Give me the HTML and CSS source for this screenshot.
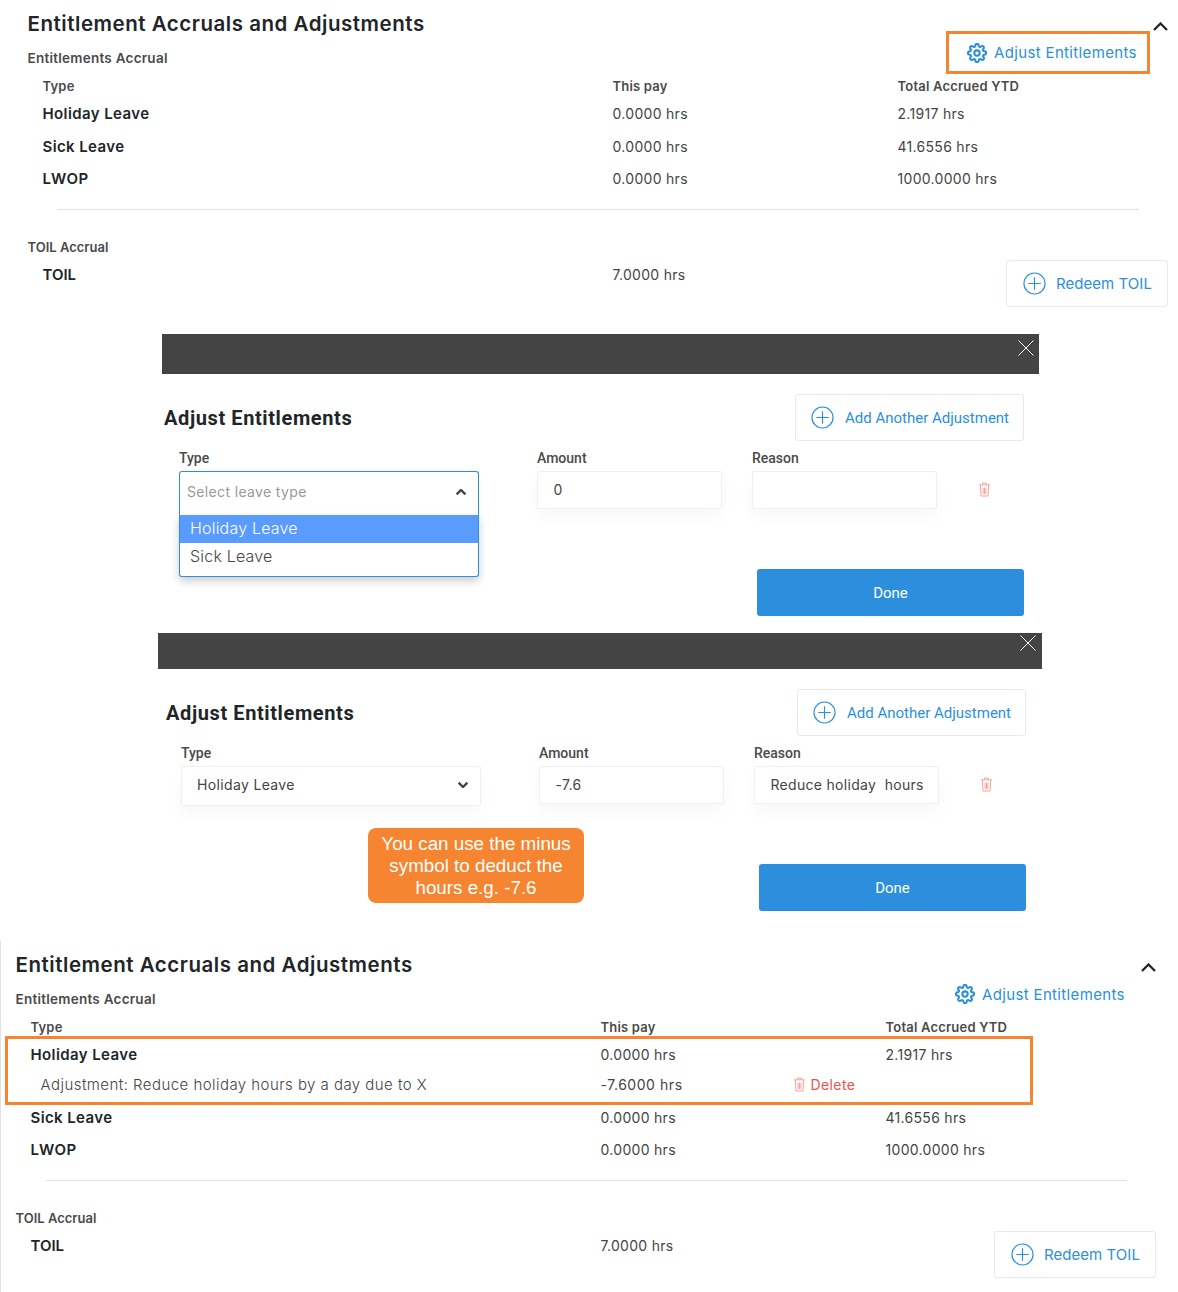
FILE: index.html
```html
<!DOCTYPE html>
<html lang="en">
<head>
    <meta charset="UTF-8">
    <meta name="viewport" content="width=device-width, initial-scale=1.0">
    <title>Entitlement Accruals and Adjustments</title>
    <link rel="stylesheet" href="styles.css">
</head>
<body>
    <svg class="icon-defs" aria-hidden="true">
        <symbol id="gear" viewBox="0 0 24 24">
            <circle cx="12" cy="12" r="3.2" fill="none" stroke="currentColor" stroke-width="2.5"/>
            <path fill="none" stroke="currentColor" stroke-width="2.5" d="M19.4 15a1.65 1.65 0 0 0 .33 1.82l.06.06a2 2 0 0 1 0 2.83 2 2 0 0 1-2.83 0l-.06-.06a1.65 1.65 0 0 0-1.82-.33 1.65 1.65 0 0 0-1 1.51V21a2 2 0 0 1-2 2 2 2 0 0 1-2-2v-.09A1.65 1.65 0 0 0 9 19.4a1.65 1.65 0 0 0-1.82.33l-.06.06a2 2 0 0 1-2.83 0 2 2 0 0 1 0-2.83l.06-.06a1.65 1.65 0 0 0 .33-1.82 1.65 1.65 0 0 0-1.51-1H3a2 2 0 0 1-2-2 2 2 0 0 1 2-2h.09A1.65 1.65 0 0 0 4.6 9a1.65 1.65 0 0 0-.33-1.82l-.06-.06a2 2 0 0 1 0-2.83 2 2 0 0 1 2.83 0l.06.06a1.65 1.65 0 0 0 1.82.33H9a1.65 1.65 0 0 0 1-1.51V3a2 2 0 0 1 2-2 2 2 0 0 1 2 2v.09a1.65 1.65 0 0 0 1 1.51 1.65 1.65 0 0 0 1.82-.33l.06-.06a2 2 0 0 1 2.83 0 2 2 0 0 1 0 2.83l-.06.06a1.65 1.65 0 0 0-.33 1.82V9a1.65 1.65 0 0 0 1.51 1H21a2 2 0 0 1 2 2 2 2 0 0 1-2 2h-.09a1.65 1.65 0 0 0-1.51 1z"/>
        </symbol>
        <symbol id="plus-circle" viewBox="0 0 24 24">
            <circle cx="12" cy="12" r="11" fill="none" stroke="currentColor" stroke-width="1.2"/>
            <path fill="none" stroke="currentColor" stroke-width="1.2" d="M12 5.5v13M5.5 12h13"/>
        </symbol>
        <symbol id="trash" viewBox="0 0 14 16">
            <path fill="none" stroke="currentColor" d="M1 3h12M5 3V1h4v2M2.5 3l.7 12h7.6l.7-12M5.5 6v7M7 6v7M8.5 6v7"/>
        </symbol>
        <symbol id="chevron-up" viewBox="0 0 15 9">
            <path fill="none" stroke="currentColor" d="M1 8l6.5-6.5L14 8"/>
        </symbol>
        <symbol id="close" viewBox="0 0 16 16">
            <path fill="none" stroke="currentColor" d="M.5.5l15 15M15.5.5l-15 15"/>
        </symbol>
    </svg>

    <section class="panel panel-first">
        <div class="panel-head">
            <div>
                <h2>Entitlement Accruals and Adjustments</h2>
                <h3 class="subhead">Entitlements Accrual</h3>
            </div>
            <div class="panel-tools">
                <svg class="collapse"><use href="#chevron-up"/></svg>
                <a class="adjust-link highlighted"><svg class="gear"><use href="#gear"/></svg>Adjust Entitlements</a>
            </div>
        </div>
        <div class="row row-header"><span>Type</span><span>This pay</span><span>Total Accrued YTD</span></div>
        <div class="row"><b>Holiday Leave</b><span>0.0000 hrs</span><span>2.1917 hrs</span></div>
        <div class="row"><b>Sick Leave</b><span>0.0000 hrs</span><span>41.6556 hrs</span></div>
        <div class="row"><b>LWOP</b><span>0.0000 hrs</span><span>1000.0000 hrs</span></div>
        <hr class="rule">
        <h3 class="subhead toil-head">TOIL Accrual</h3>
        <div class="row row-toil">
            <b>TOIL</b><span>7.0000 hrs</span>
            <button class="outline-btn redeem-btn"><svg class="plus"><use href="#plus-circle"/></svg>Redeem TOIL</button>
        </div>
    </section>

    <section class="dialog dialog-open">
        <div class="dialog-bar"><svg class="close"><use href="#close"/></svg></div>
        <div class="dialog-title">
            <h2>Adjust Entitlements</h2>
            <button class="outline-btn add-btn"><svg class="plus"><use href="#plus-circle"/></svg>Add Another Adjustment</button>
        </div>
        <div class="form-row">
            <div class="field field-type">
                <label>Type</label>
                <div class="select select-open">
                    <span class="placeholder">Select leave type</span>
                    <svg class="select-arrow"><use href="#chevron-up"/></svg>
                    <ul class="select-menu">
                        <li class="active">Holiday Leave</li>
                        <li>Sick Leave</li>
                    </ul>
                </div>
            </div>
            <div class="field">
                <label>Amount</label>
                <input type="text" value="0">
            </div>
            <div class="field">
                <label>Reason</label>
                <input type="text">
            </div>
            <svg class="trash"><use href="#trash"/></svg>
        </div>
        <div class="form-actions">
            <button class="done-btn">Done</button>
        </div>
    </section>

    <section class="dialog dialog-filled">
        <div class="dialog-bar"><svg class="close"><use href="#close"/></svg></div>
        <div class="dialog-title">
            <h2>Adjust Entitlements</h2>
            <button class="outline-btn add-btn"><svg class="plus"><use href="#plus-circle"/></svg>Add Another Adjustment</button>
        </div>
        <div class="form-row">
            <div class="field field-type">
                <label>Type</label>
                <div class="select">
                    <span>Holiday Leave</span>
                    <svg class="select-arrow arrow-down"><use href="#chevron-up"/></svg>
                </div>
            </div>
            <div class="field">
                <label>Amount</label>
                <input type="text" value="-7.6">
            </div>
            <div class="field">
                <label>Reason</label>
                <input type="text" value="Reduce holiday  hours">
            </div>
            <svg class="trash"><use href="#trash"/></svg>
        </div>
        <div class="form-actions">
            <div class="callout">You can use the minus symbol to deduct the hours e.g. -7.6</div>
            <button class="done-btn">Done</button>
        </div>
    </section>

    <section class="panel panel-last">
        <div class="panel-head">
            <div>
                <h2>Entitlement Accruals and Adjustments</h2>
                <h3 class="subhead">Entitlements Accrual</h3>
            </div>
            <div class="panel-tools">
                <svg class="collapse"><use href="#chevron-up"/></svg>
                <a class="adjust-link"><svg class="gear"><use href="#gear"/></svg>Adjust Entitlements</a>
            </div>
        </div>
        <div class="row row-header"><span>Type</span><span>This pay</span><span>Total Accrued YTD</span></div>
        <div class="adjusted">
            <div class="row"><b>Holiday Leave</b><span>0.0000 hrs</span><span>2.1917 hrs</span></div>
            <div class="row row-adjustment">
                <span class="adjustment-name">Adjustment: Reduce holiday hours by a day due to X</span>
                <span class="adjustment-amount"><span class="amount">-7.6000 hrs</span><a class="delete-link"><svg class="trash-small"><use href="#trash"/></svg>Delete</a></span>
            </div>
        </div>
        <div class="row"><b>Sick Leave</b><span>0.0000 hrs</span><span>41.6556 hrs</span></div>
        <div class="row"><b>LWOP</b><span>0.0000 hrs</span><span>1000.0000 hrs</span></div>
        <hr class="rule">
        <h3 class="subhead toil-head">TOIL Accrual</h3>
        <div class="row row-toil">
            <b>TOIL</b><span>7.0000 hrs</span>
            <button class="outline-btn redeem-btn"><svg class="plus"><use href="#plus-circle"/></svg>Redeem TOIL</button>
        </div>
    </section>
</body>
</html>
```

FILE: styles.css
```css
body {
    margin: 0;
    background: #fff;
    color: #212529;
    font-family: Inter, "Noto Sans", sans-serif;
    font-size: 14px;
}
h2, h3 {
    margin: 0;
}
.icon-defs {
    display: none;
}

/* accrual panels */
.panel {
    padding-left: 27.5px;
    padding-right: 10px;
    padding-bottom: 27px;
}
.panel-last {
    padding-left: 14.5px;
    padding-right: 22px;
    padding-bottom: 14px;
    border-left: 1px solid #e2e2e2;
}
.panel-head {
    display: flex;
    justify-content: space-between;
    height: 74px;
}
.panel-head h2 {
    padding-top: 9px;
    font-size: 20.5px;
    line-height: 30px;
    font-weight: 600;
    letter-spacing: 0.53px;
}
.subhead {
    margin-top: 9px;
    font-size: 13.5px;
    line-height: 20px;
    font-weight: 600;
    letter-spacing: 0.25px;
    color: #4a4a4a;
}
.panel-tools {
    display: flex;
    flex-direction: column;
    align-items: flex-end;
    padding-top: 22px;
}
.collapse {
    width: 15px;
    height: 9px;
    color: #212529;
    stroke-width: 2.3;
}
.adjust-link {
    display: flex;
    align-items: center;
    box-sizing: border-box;
    width: 204px;
    height: 43px;
    margin-right: 18px;
    padding-left: 18px;
    border: 3px solid transparent;
    color: #2b8fdd;
    font-size: 15px;
    letter-spacing: 0.35px;
    white-space: nowrap;
}
.panel-last .adjust-link {
    padding-top: 2px;
}
.highlighted {
    border-color: #f58530;
}
.gear {
    width: 20px;
    height: 20px;
    margin-right: 7px;
    flex: none;
}
.row {
    display: grid;
    grid-template-columns: 570px 285px 1fr;
    align-items: center;
    height: 32.4px;
    padding-left: 15px;
    color: #444;
    letter-spacing: 0.3px;
}
.row b {
    font-size: 15px;
    font-weight: 600;
    letter-spacing: 0.4px;
    color: #212529;
}
.row-header {
    height: 23.6px;
    font-size: 13px;
    font-weight: 600;
    letter-spacing: 0.2px;
    color: #4a4a4a;
}
.rule {
    width: 1081px;
    height: 1px;
    margin: 14px 0 0 30.5px;
    border: 0;
    background: #e2e2e2;
}
.toil-head {
    margin-top: 27px;
    font-size: 13px;
    letter-spacing: 0;
}
.row-toil {
    align-items: start;
    height: auto;
    margin-top: 2px;
    line-height: 32px;
}
.row-toil b {
    letter-spacing: 0;
}
.redeem-btn {
    justify-self: end;
    width: 162px;
    margin-top: 1px;
    padding-left: 15px;
    letter-spacing: 0.05px;
}
.redeem-btn .plus {
    margin-right: 10px;
}
.outline-btn {
    display: flex;
    align-items: center;
    box-sizing: border-box;
    height: 47px;
    padding: 0 0 0 16px;
    border: 1px solid #e6eaee;
    border-radius: 3px;
    background: #fff;
    color: #2b8fdd;
    font-family: inherit;
    font-size: 15px;
    white-space: nowrap;
}
.plus {
    width: 23px;
    height: 23px;
    margin-right: 11px;
    flex: none;
}

/* highlighted holiday row */
.adjusted {
    width: 1028px;
    box-sizing: border-box;
    margin: -2.6px 0 -3.4px -10.5px;
    border: 3px solid #f58530;
    height: 69px;
}
.adjusted .row {
    padding-left: 22.5px;
}
.adjusted .row:first-child {
    height: 32px;
}
.row-adjustment {
    height: 28px;
}
.adjustment-name {
    padding-left: 10px;
    font-size: 15px;
    font-weight: 300;
    letter-spacing: 0.45px;
    white-space: nowrap;
}
.adjustment-amount {
    display: flex;
    align-items: center;
}
.amount {
    width: 192px;
    letter-spacing: 0.55px;
}
.delete-link {
    display: flex;
    align-items: center;
    color: #f0524f;
    letter-spacing: 0.4px;
}
.trash-small {
    width: 13px;
    height: 15px;
    margin-right: 5px;
    color: #f59a97;
}

/* adjust entitlements dialogs */
.dialog-open {
    width: 877px;
    margin-left: 162px;
    box-sizing: border-box;
    padding: 0 15px 17px 2px;
}
.dialog-filled {
    width: 884px;
    margin-left: 158px;
    box-sizing: border-box;
    padding: 0 16px 30px 8px;
}
.dialog-bar {
    display: flex;
    justify-content: flex-end;
    align-items: flex-start;
    height: 40px;
    margin: 0 -15px 20px -2px;
    padding: 6px 5px 0 0;
    box-sizing: border-box;
    background: #444;
}
.dialog-filled .dialog-bar {
    height: 36px;
    margin: 0 -16px 20px -8px;
    padding: 2px 6px 0 0;
}
.close {
    width: 16px;
    height: 16px;
    color: #fff;
}
.dialog-title {
    display: flex;
    justify-content: space-between;
    align-items: center;
}
.dialog-title h2 {
    padding-top: 1px;
    font-family: Roboto, "Liberation Sans", sans-serif;
    font-size: 20px;
    font-weight: 700;
    letter-spacing: 0.6px;
}
.add-btn {
    width: 229px;
    padding: 1px 0 0 15px;
    font-family: Roboto, "Liberation Sans", sans-serif;
    font-size: 15px;
}
.add-btn .plus {
    margin-top: -1px;
}
.form-row {
    display: flex;
    gap: 30px;
    margin-top: 9px;
    padding-left: 15px;
}
.field {
    width: 185px;
}
.field-type {
    width: 300px;
    margin-right: 28px;
}
.field label {
    display: block;
    margin-bottom: 5px;
    font-family: Roboto, "Liberation Sans", sans-serif;
    font-size: 14px;
    line-height: 16px;
    font-weight: 500;
    color: #4a4a4a;
}
.field input {
    display: block;
    box-sizing: border-box;
    width: 185px;
    height: 38px;
    padding: 0 14px 0 15.5px;
    border: 1px solid #eef1f4;
    border-radius: 2px;
    box-shadow: 0 8px 16px rgba(0, 0, 0, .03);
    color: #444;
    font-family: inherit;
    font-size: 14px;
    letter-spacing: 0.3px;
    outline: none;
}
.select {
    display: flex;
    justify-content: space-between;
    align-items: center;
    box-sizing: border-box;
    height: 40px;
    padding: 0 12px 2px 15px;
    border: 1px solid #eef1f4;
    border-radius: 2px;
    box-shadow: 0 8px 16px rgba(0, 0, 0, .03);
    color: #444;
    letter-spacing: 0.35px;
    position: relative;
}
.select-open {
    height: 44px;
    padding-left: 7px;
    border-color: #2b8fdd;
    border-bottom-color: #fff;
    border-radius: 3px 3px 0 0;
    box-shadow: none;
}
.placeholder {
    color: #999;
}
.select-arrow {
    width: 10px;
    height: 6px;
    color: #444;
    stroke-width: 3.6;
}
.arrow-down {
    transform: rotate(180deg);
}
.select-menu {
    position: absolute;
    top: 100%;
    left: -1px;
    right: -1px;
    height: 62px;
    margin: 1px 0 0;
    padding: 0;
    box-sizing: border-box;
    list-style: none;
    background: #fff;
    border: 1px solid #2b8fdd;
    border-top: 0;
    border-radius: 0 0 3px 3px;
    box-shadow: 0 4px 8px rgba(0, 0, 0, .2);
    font-size: 16px;
    font-weight: 300;
    letter-spacing: 0.2px;
}
.select-menu li {
    height: 28px;
    padding-left: 10px;
    line-height: 27px;
}
.select-menu .active {
    background: #5a9bff;
    color: #fff;
}
.trash {
    width: 13px;
    height: 15px;
    margin: 32px 0 0 11px;
    color: #f59a97;
}
.form-actions {
    display: flex;
    justify-content: flex-end;
    margin-top: 54px;
}
.dialog-filled .form-actions {
    margin-top: 22px;
}
.done-btn {
    width: 267px;
    height: 47px;
    padding-top: 2px;
    border: 0;
    border-radius: 3px;
    background: #2b8fdd;
    color: #fff;
    font-family: Roboto, "Liberation Sans", sans-serif;
    font-size: 15px;
    font-weight: 400;
}
.dialog-filled .done-btn {
    margin-top: 36px;
}
.callout {
    box-sizing: border-box;
    width: 216px;
    height: 75px;
    margin-right: 175px;
    padding: 5px 6px 0;
    border-radius: 8px;
    background: #f58530;
    color: #fff;
    font-family: "Liberation Sans", sans-serif;
    font-size: 18.8px;
    line-height: 22px;
    text-align: center;
}
```
